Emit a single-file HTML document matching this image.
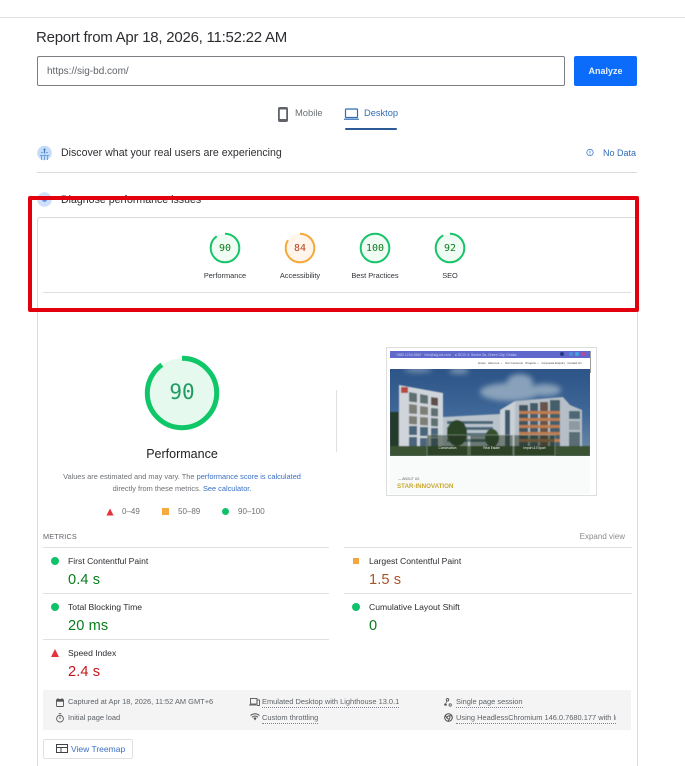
<!DOCTYPE html>
<html lang="en">
<head>
<meta charset="utf-8">
<title>PageSpeed Insights Report</title>
<style>
html,body{margin:0;padding:0;background:#fff}
body{width:685px;height:766px;overflow:hidden;position:relative;font-family:"Liberation Sans",sans-serif;color:#202124}
#p{position:absolute;left:0;top:0;width:685px;height:766px;overflow:hidden;filter:blur(.3px)}
.a{position:absolute}
.t{position:absolute;white-space:nowrap;line-height:12px;height:12px}
.l{position:absolute;height:1px;background:#e0e0e0}
.lab{font-size:8.6px;color:#2a2c30}
.val{font-size:14.6px;line-height:18px;height:18px;letter-spacing:.1px}
.g{color:#0a7d1e}.o{color:#a8542b}.r{color:#c5161d}
.ft{font-size:7.45px;color:#5f6368}
.u{border-bottom:1px dotted #80868b;line-height:10px;height:10px}
.c{text-align:center}
.sl{font-size:7.4px;color:#303338}
.mono{font-family:"DejaVu Sans Mono","Liberation Mono",monospace}
a{color:inherit;text-decoration:none}
svg{position:absolute;overflow:visible}
.tiny{position:absolute;white-space:nowrap;font-size:3.2px;line-height:4px}
</style>
</head>
<body>
<div id="p">
<div class="l" style="left:0;top:17px;width:685px"></div>

<div class="t" style="left:36px;top:29px;height:18px;line-height:18px;font-size:15px;letter-spacing:-.24px;color:#2b2d30">Report from Apr 18, 2026, 11:52:22 AM</div>

<div class="a" style="left:37px;top:56px;width:526px;height:28px;border:1px solid #7b7f84;border-radius:2px"></div>
<div class="t" style="left:47px;top:66px;font-size:10px;color:#5f6368">https://sig-bd.com/</div>
<div class="a" style="left:574px;top:56px;width:63px;height:30px;background:#0b6cfb;border-radius:2px"></div>
<div class="t c" style="left:574px;width:63px;top:65px;font-size:9px;font-weight:bold;color:#e8f0fe">Analyze</div>

<svg style="left:278px;top:107px" width="10" height="15" viewBox="0 0 10 15"><rect x=".9" y=".9" width="8.200" height="13.200" rx="1" fill="none" stroke="#5f6368" stroke-width="1.800"/><rect x="1" y="12" width="8" height="2" fill="#5f6368"/><rect x="1" y="1" width="8" height="1.500" fill="#5f6368"/></svg>
<div class="t" style="left:295px;top:107px;font-size:9.400px;color:#6b6f74">Mobile</div>
<svg style="left:344px;top:108px" width="15" height="13" viewBox="0 0 15 13"><rect x="1.500" y="1" width="12" height="8.500" rx=".8" fill="none" stroke="#2f6db5" stroke-width="1.200"/><rect x="0" y="10.600" width="15" height="1.200" fill="#2f6db5"/></svg>
<div class="t" style="left:364px;top:107px;font-size:9.300px;color:#2f6db5">Desktop</div>
<div class="a" style="left:345px;top:128px;width:52px;height:1.500px;background:#2c5a94;border-radius:1px"></div>

<svg style="left:37px;top:145px" width="15" height="16" viewBox="0 0 15 16"><circle cx="7.500" cy="8" r="7.300" fill="#c5dcf8"/><path d="M7.500 5.500v3M5 7v1M10 7v1" stroke="#3f7fc8" stroke-width="1.200"/><path d="M3 10.500h9M4.500 10v5M7.500 10v5M10.500 10v5" stroke="#6ea5e0" stroke-width="1"/><circle cx="7.500" cy="4.500" r="1" fill="#3469a8"/></svg>
<div class="t" style="left:61px;top:147px;font-size:10.600px;color:#2d2f33">Discover what your real users are experiencing</div>
<svg style="left:586px;top:148px" width="8" height="9" viewBox="0 0 8 9"><circle cx="4" cy="4.500" r="3.200" fill="none" stroke="#3f7fc8" stroke-width=".8"/><path d="M4 2.800v2.400M4 5.800v.8" stroke="#3f7fc8" stroke-width=".8"/></svg>
<div class="t" style="left:603px;top:147px;font-size:9px;color:#2f6db5">No Data</div>
<div class="l" style="left:37px;top:172px;width:600px;background:#dcdcdc"></div>

<svg style="left:37px;top:192px" width="15" height="15" viewBox="0 0 15 15"><circle cx="7.500" cy="7.500" r="7.300" fill="#cfe0fb"/><circle cx="7.500" cy="7.500" r="2.500" fill="#6f8fe0"/></svg>
<div class="t" style="left:61px;top:194px;font-size:10.600px;color:#2d2f33">Diagnose performance issues</div>

<!-- main card -->
<div class="a" style="left:37px;top:217px;width:599px;height:560px;border:1px solid #d9dadc;border-radius:3px 3px 0 0"></div>

<!-- small gauges -->
<svg style="left:209px;top:232px" width="32" height="32" viewBox="0 0 32 32"><circle cx="16" cy="16" r="14.300" fill="#f0fbf4"/><circle cx="16" cy="16" r="14.300" fill="none" stroke="#17c46a" stroke-width="2" stroke-dasharray="80.900 89.900" transform="rotate(-90 16 16)"/></svg>
<div class="t c mono g" style="left:209px;width:32px;top:243px;font-size:10px">90</div>
<div class="t c sl" style="left:195px;width:60px;top:270px">Performance</div>

<svg style="left:284px;top:232px" width="32" height="32" viewBox="0 0 32 32"><circle cx="16" cy="16" r="14.300" fill="#fff5ea"/><circle cx="16" cy="16" r="14.300" fill="none" stroke="#f5a83a" stroke-width="2" stroke-dasharray="75.500 89.900" transform="rotate(-90 16 16)"/></svg>
<div class="t c mono" style="left:284px;width:32px;top:243px;font-size:10px;color:#b8401a">84</div>
<div class="t c sl" style="left:270px;width:60px;top:270px">Accessibility</div>

<svg style="left:359px;top:232px" width="32" height="32" viewBox="0 0 32 32"><circle cx="16" cy="16" r="14.300" fill="#f0fbf4" stroke="#17c46a" stroke-width="2"/></svg>
<div class="t c mono g" style="left:359px;width:32px;top:243px;font-size:10px">100</div>
<div class="t c sl" style="left:345px;width:60px;top:270px">Best Practices</div>

<svg style="left:434px;top:232px" width="32" height="32" viewBox="0 0 32 32"><circle cx="16" cy="16" r="14.300" fill="#f0fbf4"/><circle cx="16" cy="16" r="14.300" fill="none" stroke="#17c46a" stroke-width="2" stroke-dasharray="82.700 89.900" transform="rotate(-90 16 16)"/></svg>
<div class="t c mono g" style="left:434px;width:32px;top:243px;font-size:10px">92</div>
<div class="t c sl" style="left:420px;width:60px;top:270px">SEO</div>

<div class="l" style="left:43px;top:292px;width:588px;background:#dedfe1"></div>

<!-- red annotation -->
<div class="a" style="left:28px;top:196px;width:603px;height:108px;border:4px solid #e2000f;border-radius:2px"></div>

<!-- large gauge -->
<svg style="left:144px;top:355px" width="76" height="76" viewBox="0 0 76 76"><circle cx="38" cy="38" r="34.700" fill="#e6f9ee"/><circle cx="38" cy="38" r="34.700" fill="none" stroke="#0fc768" stroke-width="5" stroke-dasharray="196.200 218" transform="rotate(-90 38 38)"/></svg>
<div class="t c mono" style="left:144px;width:76px;top:378px;height:28px;line-height:28px;font-size:21px;color:#1f9c62">90</div>
<div class="t c" style="left:122px;width:120px;top:447px;height:14px;line-height:14px;font-size:12.500px;color:#202124">Performance</div>
<div class="t c" style="left:42px;width:280px;top:471px;font-size:7.400px;color:#6d7074">Values are estimated and may vary. The <a href="#" style="color:#3a6fc4">performance score is calculated</a></div>
<div class="t c" style="left:42px;width:280px;top:483px;font-size:7.400px;color:#6d7074">directly from these metrics. <a href="#" style="color:#3a6fc4">See calculator.</a></div>

<svg style="left:106px;top:508px" width="8" height="8" viewBox="0 0 8 8"><path d="M4 .5L7.600 7.500H.4z" fill="#e5333d"/></svg>
<div class="t" style="left:122px;top:506px;font-size:8px;color:#6d7074">0–49</div>
<div class="a" style="left:162px;top:508px;width:7px;height:7px;background:#f6a93e"></div>
<div class="t" style="left:178px;top:506px;font-size:8px;color:#6d7074">50–89</div>
<div class="a" style="left:222px;top:508px;width:7px;height:7px;background:#0fc16a;border-radius:50%"></div>
<div class="t" style="left:238px;top:506px;font-size:8px;color:#6d7074">90–100</div>

<div class="a" style="left:336px;top:390px;width:1px;height:62px;background:#dfe0e2"></div>

<!-- thumbnail -->
<div class="a" style="left:386px;top:347px;width:209px;height:147px;border:1px solid #dedede;background:#fff"></div>
<svg style="left:0;top:0" width="685" height="766" viewBox="0 0 685 766">
<defs>
<linearGradient id="sky" x1="0" y1="0" x2="0" y2="1"><stop offset="0" stop-color="#2d5487"/><stop offset=".5" stop-color="#3f6797"/><stop offset="1" stop-color="#6f8ca8"/></linearGradient>
<filter id="b1" x="-30%" y="-30%" width="160%" height="160%"><feGaussianBlur stdDeviation="2.600"/></filter>
<filter id="b2" x="-10%" y="-10%" width="120%" height="120%"><feGaussianBlur stdDeviation=".4"/></filter>
<clipPath id="hero"><rect x="390" y="369" width="200" height="87"/></clipPath>
</defs>
<rect x="390" y="369" width="200" height="87" fill="url(#sky)"/>
<g clip-path="url(#hero)">
<g filter="url(#b1)" fill="#9fb3c6" opacity=".8">
<ellipse cx="510" cy="392" rx="30" ry="9"/><ellipse cx="520" cy="382" rx="13" ry="8"/><ellipse cx="545" cy="390" rx="16" ry="6"/>
<ellipse cx="459" cy="371" rx="10" ry="2.500"/><ellipse cx="418" cy="370" rx="14" ry="2"/>
</g>
<g filter="url(#b2)">
<rect x="390" y="412" width="10" height="36" fill="#203a2c"/>
<path d="M443 417L500 414V448H443z" fill="#b9c3cc"/>
<g fill="#4c6676"><rect x="447" y="421" width="46" height="3"/><rect x="447" y="427" width="46" height="3"/><rect x="447" y="433" width="46" height="3"/><rect x="447" y="439" width="46" height="3"/></g>
<path d="M399 385L443 393V448H399z" fill="#cfd5da"/>
<g fill="#5f6f72"><path d="M409 392l8 1.500v9l-8-1z"/><path d="M420 394l8 1.500v8.500l-8-1z"/><path d="M431 397l7 1v8l-7-1z" fill="#5e4f48"/>
<path d="M409 404l8 1v9l-8-.5z" fill="#7d7e75"/><path d="M420 406l8 1v8l-8-.5z" fill="#7d7e75"/><path d="M431 408l7 .5v8l-7-.5z"/>
<path d="M409 416l8 .5v8l-8-.5z" fill="#7d7e75"/><path d="M420 417l8 .5v8l-8-.5z" fill="#7d7e75"/><path d="M431 418l7 .5v8l-7-.5z"/>
<rect x="409" y="426" width="8" height="9" fill="#4a667b"/><rect x="420" y="427" width="8" height="9" fill="#4a667b"/><rect x="431" y="428" width="7" height="9" fill="#4a667b"/>
<rect x="409" y="437" width="8" height="9" fill="#4a667b"/><rect x="420" y="438" width="8" height="8" fill="#4a667b"/><rect x="431" y="438" width="7" height="8" fill="#4a667b"/></g>
<rect x="401" y="387" width="7" height="6" fill="#b64a43"/>
<ellipse cx="457" cy="433" rx="10" ry="13" fill="#2b4528"/><ellipse cx="492" cy="438" rx="7" ry="9" fill="#34502f"/>
<path d="M500 410L515 401V448H500z" fill="#c9d0d6"/>
<rect x="505" y="410" width="5" height="38" fill="#42596a"/>
<path d="M515 401L563 397L570 405L582 410V448H515z" fill="#b6bfc7"/>
<g>
<rect x="519" y="405" width="9" height="43" fill="#3f5560"/><rect x="530" y="403" width="8" height="45" fill="#445c68"/><rect x="540" y="402" width="8" height="46" fill="#675546"/><rect x="550" y="400" width="10" height="48" fill="#445e6a"/>
<g fill="#bd7d50"><rect x="519" y="411" width="41" height="3"/><rect x="519" y="418" width="41" height="3"/><rect x="519" y="425" width="41" height="3"/><rect x="519" y="432" width="41" height="3"/><rect x="519" y="439" width="41" height="3"/></g>
<rect x="569" y="411" width="11" height="8" fill="#4f6874"/><rect x="569" y="421" width="11" height="9" fill="#8e9aa1"/><rect x="569" y="432" width="11" height="15" fill="#5a6d74"/>
</g>
<rect x="390" y="446" width="200" height="10" fill="#3b5230"/>
<g fill="#22331f" opacity=".5"><rect x="427" y="435" width="41" height="21"/><rect x="470" y="435" width="43" height="21"/><rect x="514" y="435" width="41" height="21"/></g>
<g fill="none" stroke="#c7d2cc" stroke-width=".5" opacity=".7"><rect x="427" y="435" width="41" height="21"/><rect x="470" y="435" width="43" height="21"/><rect x="514" y="435" width="41" height="21"/></g>
</g>
</g>
</svg>
<div class="tiny c" style="left:427px;width:41px;top:446px;color:#eee">Construction</div>
<div class="tiny c" style="left:470px;width:43px;top:446px;color:#eee">Real Estate</div>
<div class="tiny c" style="left:514px;width:41px;top:446px;color:#eee">Import &amp; Export</div>
<div class="a" style="left:390px;top:351px;width:200px;height:7px;background:#5f69cc"></div>
<div class="tiny" style="left:396px;top:352.500px;font-size:3.500px;color:#c9cfef">+880 1234-5667 &nbsp; info@sig-bd.com &nbsp;&nbsp; ● SCCI 4, Sector 2a, Green City, Dhaka</div>
<div class="a" style="left:560px;top:352px;width:4px;height:4px;border-radius:50%;background:#25397f"></div>
<div class="a" style="left:569px;top:352px;width:4px;height:4px;border-radius:50%;background:#4a8fd8"></div>
<div class="a" style="left:575px;top:352px;width:4px;height:4px;border-radius:50%;background:#42a5e8"></div>
<div class="a" style="left:581px;top:352px;width:4px;height:4px;border-radius:50%;background:#c2459a"></div>
<div class="a" style="left:590px;top:351px;width:1px;height:22px;background:#9a9a9a"></div>
<div class="tiny" style="left:478px;top:361px;font-size:2.900px;color:#444">Home &nbsp; About us ⌄ &nbsp; Our Concerns &nbsp; Projects ⌄ &nbsp; Corporate Enquiry &nbsp; Contact Us</div>
<div class="a" style="left:390px;top:456px;width:200px;height:38px;background:#f9fafa"></div>
<div class="tiny" style="left:398px;top:477px;color:#666;font-size:3.400px">— ABOUT US</div>
<div class="t" style="left:397px;top:481px;font-size:6.200px;font-weight:bold;color:#c9a92e">STAR-INNOVATION</div>

<!-- metrics -->
<div class="t" style="left:43px;top:531px;font-size:7.300px;color:#5f6368;letter-spacing:.15px">METRICS</div>
<div class="t" style="right:60px;top:531px;font-size:8px;color:#8a8d91">Expand view</div>
<div class="l" style="left:43px;top:547px;width:286px"></div>
<div class="l" style="left:344px;top:547px;width:288px"></div>
<div class="l" style="left:43px;top:593px;width:286px"></div>
<div class="l" style="left:344px;top:593px;width:288px"></div>
<div class="l" style="left:43px;top:639px;width:286px"></div>

<div class="a" style="left:51px;top:557px;width:8px;height:8px;border-radius:50%;background:#0fc16a"></div>
<div class="t lab" style="left:68px;top:555px">First Contentful Paint</div>
<div class="t val g" style="left:68px;top:571px">0.4 s</div>

<div class="a" style="left:51px;top:603px;width:8px;height:8px;border-radius:50%;background:#0fc16a"></div>
<div class="t lab" style="left:68px;top:601px">Total Blocking Time</div>
<div class="t val g" style="left:68px;top:617px">20 ms</div>

<svg style="left:51px;top:649px" width="8" height="8" viewBox="0 0 8 8"><path d="M4 0L8 8H0z" fill="#e5333d"/></svg>
<div class="t lab" style="left:68px;top:647px">Speed Index</div>
<div class="t val r" style="left:68px;top:663px">2.4 s</div>

<div class="a" style="left:353px;top:558px;width:6px;height:6px;background:#f3a63f"></div>
<div class="t lab" style="left:369px;top:555px">Largest Contentful Paint</div>
<div class="t val o" style="left:369px;top:571px">1.5 s</div>

<div class="a" style="left:352px;top:603px;width:8px;height:8px;border-radius:50%;background:#0fc16a"></div>
<div class="t lab" style="left:369px;top:601px">Cumulative Layout Shift</div>
<div class="t val g" style="left:369px;top:617px">0</div>

<!-- runtime footer -->
<div class="a" style="left:43px;top:690px;width:588px;height:40px;background:#f4f4f4"></div>
<svg style="left:56px;top:698px" width="8" height="9" viewBox="0 0 8 9"><rect x=".5" y="1.500" width="7" height="7" rx=".7" fill="none" stroke="#555" stroke-width=".9"/><rect x=".5" y="1.500" width="7" height="2.200" fill="#555"/><path d="M2 0v2M6 0v2" stroke="#555" stroke-width=".9"/></svg>
<div class="t ft" style="left:68px;top:696px">Captured at Apr 18, 2026, 11:52 AM GMT+6</div>
<svg style="left:56px;top:713px" width="8" height="10" viewBox="0 0 8 10"><circle cx="4" cy="5.700" r="3.400" fill="none" stroke="#555" stroke-width=".9"/><path d="M2.700.7h2.600M4 3.500v2.500" stroke="#555" stroke-width=".9"/></svg>
<div class="t ft" style="left:68px;top:712px">Initial page load</div>

<svg style="left:249px;top:698px" width="11" height="8" viewBox="0 0 11 8"><rect x="1.500" y=".5" width="6.500" height="5.500" fill="none" stroke="#555" stroke-width=".9"/><path d="M0 7h7" stroke="#555" stroke-width=".9"/><rect x="8" y="2" width="2.500" height="5.500" fill="none" stroke="#555" stroke-width=".9"/></svg>
<div class="t ft u" style="left:262px;top:697px">Emulated Desktop with Lighthouse 13.0.1</div>
<svg style="left:250px;top:713px" width="10" height="8" viewBox="0 0 10 8"><path d="M.5 2.500Q5 -1 9.500 2.500M2 4.200Q5 1.800 8 4.200" fill="none" stroke="#555" stroke-width="1"/><path d="M3.400 5L5 7.500 6.600 5Q5 3.800 3.400 5z" fill="#555"/></svg>
<div class="t ft u" style="left:262px;top:713px">Custom throttling</div>

<svg style="left:444px;top:698px" width="8" height="9" viewBox="0 0 8 9"><circle cx="3.500" cy="1.800" r="1.300" fill="none" stroke="#555" stroke-width=".9"/><circle cx="1.500" cy="6.500" r="1.300" fill="#555"/><circle cx="6.200" cy="7" r="1.200" fill="none" stroke="#555" stroke-width=".8"/><path d="M3 3L2 5" stroke="#555" stroke-width=".7"/></svg>
<div class="t ft u" style="left:456px;top:697px">Single page session</div>
<svg style="left:444px;top:713px" width="9" height="9" viewBox="0 0 9 9"><circle cx="4.500" cy="4.500" r="3.800" fill="none" stroke="#444" stroke-width="1"/><circle cx="4.500" cy="4.500" r="1.500" fill="none" stroke="#444" stroke-width=".8"/><path d="M4.500 2.800h3.500M3.200 5.500L1.500 2.300M5.800 5.500L4 8.200" stroke="#444" stroke-width=".8"/></svg>
<div class="t ft u" style="left:456px;top:713px;width:160px;overflow:hidden">Using HeadlessChromium 146.0.7680.177 with lr</div>

<!-- treemap -->
<div class="a" style="left:43px;top:739px;width:88px;height:18px;border:1px solid #e0e1e3;border-radius:2px;background:#fff"></div>
<svg style="left:56px;top:744px" width="12" height="9" viewBox="0 0 12 9"><rect x=".5" y=".5" width="11" height="8" fill="none" stroke="#3f4347" stroke-width="1"/><path d="M.5 3.500H11.500M5 3.500V8.500" stroke="#3f4347" stroke-width="1"/></svg>
<div class="t" style="left:71px;top:743px;font-size:8.500px;color:#3a6fc4">View Treemap</div>
</div>
</body>
</html>
